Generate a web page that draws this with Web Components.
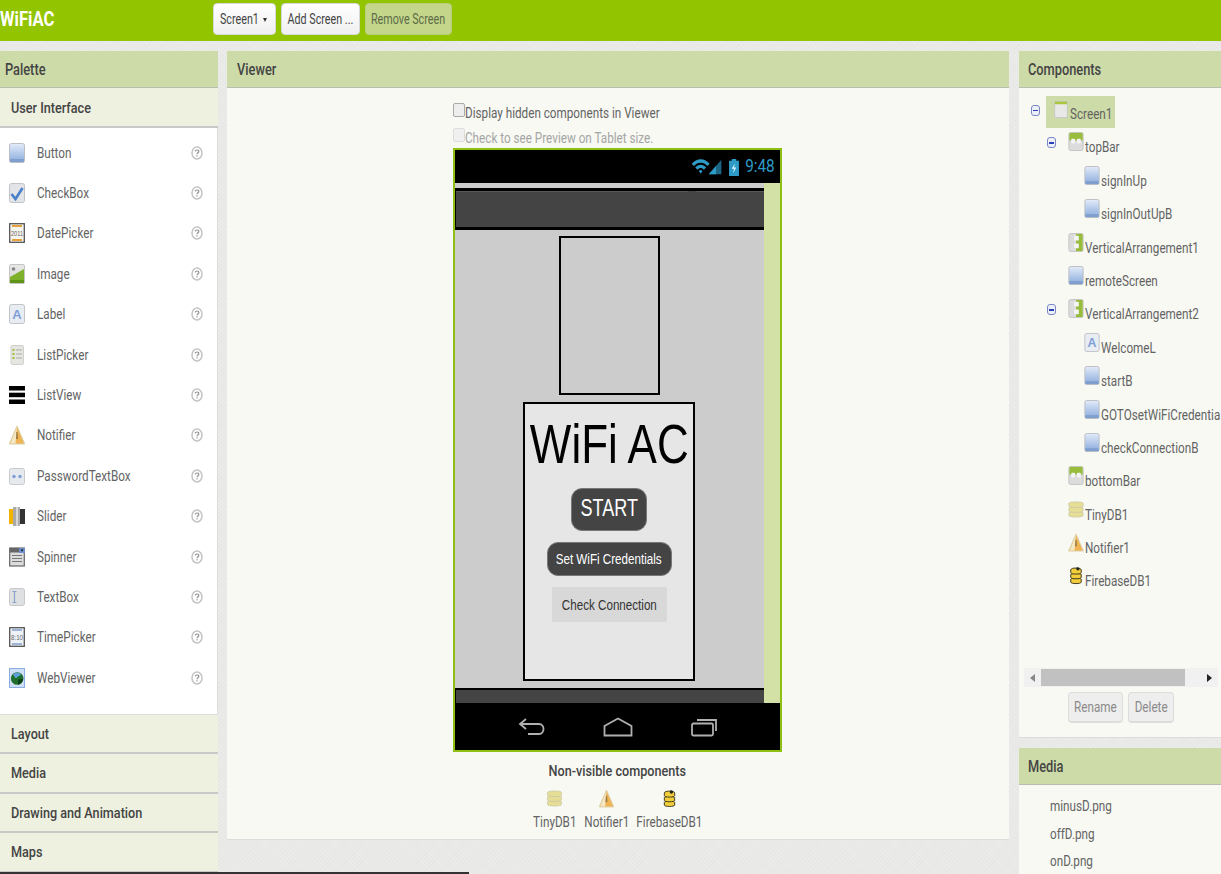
<!DOCTYPE html>
<html>
<head>
<meta charset="utf-8">
<title>WiFiAC</title>
<style>
  html, body { margin: 0; height: 874px; overflow: hidden; }
  body {
    background-color: #e9e9e7;
    background-image:
      repeating-linear-gradient(45deg, rgba(255,255,255,.14) 0 1px, transparent 1px 3px),
      repeating-linear-gradient(-45deg, rgba(0,0,0,.012) 0 1px, transparent 1px 3px);
    font-family: Roboto, "Liberation Sans", sans-serif;
    color: #555;
  }
</style>
</head>
<body>
<ai-app>
  <ai-topbar slot="top">
    <ai-tbtn arrow>Screen1</ai-tbtn>
    <ai-tbtn style="width:79px">Add Screen ...</ai-tbtn>
    <ai-tbtn off style="width:87px">Remove Screen</ai-tbtn>
  </ai-topbar>

  <ai-panel slot="left" title="Palette" style="height:823px">
    <ai-drawer style="line-height:40px">User Interface</ai-drawer>
    <ai-list>
      <pal-item icon="button">Button</pal-item>
      <pal-item icon="checkbox">CheckBox</pal-item>
      <pal-item icon="date">DatePicker</pal-item>
      <pal-item icon="image">Image</pal-item>
      <pal-item icon="label">Label</pal-item>
      <pal-item icon="listpicker">ListPicker</pal-item>
      <pal-item icon="listview">ListView</pal-item>
      <pal-item icon="notifier">Notifier</pal-item>
      <pal-item icon="password">PasswordTextBox</pal-item>
      <pal-item icon="slider">Slider</pal-item>
      <pal-item icon="spinner">Spinner</pal-item>
      <pal-item icon="textbox">TextBox</pal-item>
      <pal-item icon="time">TimePicker</pal-item>
      <pal-item icon="web">WebViewer</pal-item>
    </ai-list>
    <ai-drawer>Layout</ai-drawer>
    <ai-drawer>Media</ai-drawer>
    <ai-drawer>Drawing and Animation</ai-drawer>
    <ai-drawer>Maps</ai-drawer>
  </ai-panel>

  <ai-panel slot="mid" title="Viewer" pad style="height:788px">
    <ai-viewer></ai-viewer>
  </ai-panel>

  <ai-panel slot="right" title="Components" pad style="height:686px;--pl:9px">
    <ai-tree>
      <tree-row level="0" icon="screen" toggle selected>Screen1</tree-row>
      <tree-row level="1" icon="hbar" toggle>topBar</tree-row>
      <tree-row level="2" icon="button">signInUp</tree-row>
      <tree-row level="2" icon="button">signInOutUpB</tree-row>
      <tree-row level="1" icon="vbar">VerticalArrangement1</tree-row>
      <tree-row level="1" icon="button">remoteScreen</tree-row>
      <tree-row level="1" icon="vbar" toggle>VerticalArrangement2</tree-row>
      <tree-row level="2" icon="label">WelcomeL</tree-row>
      <tree-row level="2" icon="button">startB</tree-row>
      <tree-row level="2" icon="button">GOTOsetWiFiCredentia</tree-row>
      <tree-row level="2" icon="button">checkConnectionB</tree-row>
      <tree-row level="1" icon="hbar">bottomBar</tree-row>
      <tree-row level="1" icon="db">TinyDB1</tree-row>
      <tree-row level="1" icon="notifier">Notifier1</tree-row>
      <tree-row level="1" icon="firebase">FirebaseDB1</tree-row>
    </ai-tree>
  </ai-panel>

  <ai-panel slot="right" title="Media" pad style="height:200px;--pl:9px">
    <ai-media>
      <media-row>minusD.png</media-row>
      <media-row>offD.png</media-row>
      <media-row>onD.png</media-row>
    </ai-media>
  </ai-panel>
</ai-app>

<script>
(function () {
  const grad = (id, a, b) =>
    `<defs><linearGradient id="${id}" x1="0" y1="0" x2="0" y2="1"><stop offset="0" stop-color="${a}"/><stop offset="1" stop-color="${b}"/></linearGradient></defs>`;

  // 16x20 component icons
  const ICONS = {
    button: grad("g", "#e3ecf9", "#88a9dc") +
      `<rect x=".5" y=".5" width="15" height="19" rx="2" fill="url(#g)" stroke="#b9bec4"/><rect x="1" y="16" width="14" height="3" fill="#7f9fce"/>`,
    checkbox: `<rect x=".5" y=".5" width="15" height="19" rx="2" fill="#e2e4e8" stroke="#bfc2c6"/><path d="M2.500 11l4 5 7-11" fill="none" stroke="#4a7fc9" stroke-width="2.600"/>`,
    date: `<rect x=".7" y=".7" width="14.600" height="18.600" fill="#f6f4ee" stroke="#555" stroke-width="1.300"/><rect x="3" y="2" width="10" height="2" fill="#e3a23c"/><rect x="3" y="16" width="10" height="2" fill="#e3a23c"/><text x="8" y="12.500" font-size="7" text-anchor="middle" font-family="Liberation Sans" fill="#666" textLength="12" lengthAdjust="spacingAndGlyphs">2011</text>`,
    image: grad("g", "#e8e8e8", "#d5d8d0") +
      `<rect x=".5" y=".5" width="15" height="19" rx="1.500" fill="url(#g)" stroke="#c5c5c5"/><circle cx="4.500" cy="5" r="1.800" fill="#888"/><path d="M1 17V13L15 5V19H1z" fill="#7fb02c"/><path d="M1 19v-3h14v3z" fill="#5f9416"/>`,
    label: `<rect x=".5" y=".5" width="15" height="19" rx="2" fill="#e8ecf3" stroke="#c0c3c8"/><text x="8" y="14.500" font-size="13" font-weight="700" text-anchor="middle" font-family="Liberation Sans" fill="#7f9fd8">A</text>`,
    listpicker: `<rect x="2" y=".5" width="12.500" height="19" rx="1.500" fill="#e6e6e0" stroke="#cfcfcf"/><g fill="#9dbb3c"><rect x="3.500" y="4" width="2" height="2"/><rect x="3.500" y="8" width="2" height="2"/><rect x="3.500" y="12" width="2" height="2"/></g><g fill="#aaa"><rect x="7" y="4.500" width="6" height="1"/><rect x="7" y="8.500" width="6" height="1"/><rect x="7" y="12.500" width="6" height="1"/></g>`,
    listview: `<g fill="#000"><rect y="1" width="16" height="4.500"/><rect y="7.700" width="16" height="4.500"/><rect y="14.500" width="16" height="4.500"/></g>`,
    notifier: `<path d="M8 1L15.800 19H.2z" fill="#f0b455" stroke="#d9d2b0"/><path d="M8 2L6.500 18.500H1.200z" fill="#f3e7c6"/><path d="M7.400 7h1.200l.4 7H7z" fill="#9a7a44"/>`,
    password: `<rect x=".5" y="2.500" width="15" height="16" rx="2" fill="#e6e9ee" stroke="#c8cacd"/><circle cx="5" cy="10.500" r="1.700" fill="#7f9fd8"/><circle cx="11" cy="10.500" r="1.700" fill="#7f9fd8"/>`,
    slider: `<rect y="3" width="5" height="15" fill="#f2b400"/><rect x="4" y="1" width="7" height="19" rx="1" fill="#a9a9a9"/><rect x="7" y="1" width="2" height="19" fill="#d7d7d7"/><rect x="11" y="3" width="5" height="15" fill="#333"/>`,
    spinner: `<rect x=".7" y="1" width="14.600" height="18" fill="#dcdcdc" stroke="#666" stroke-width="1.200"/><rect x="1" y="1" width="14" height="4.500" fill="#666"/><rect x="10" y="1" width="6" height="5" fill="#6d8fd0"/><path d="M11.500 2.500h3l-1.500 2z" fill="#111"/><g fill="#777"><rect x="3" y="8" width="10" height="1"/><rect x="3" y="11" width="10" height="1"/><rect x="3" y="14" width="10" height="1"/></g>`,
    textbox: `<rect x=".5" y="1.500" width="15" height="17" rx="2" fill="#dfe0e2" stroke="#c8c8c8"/><path d="M3.500 4.500h4M3.500 15.500h4M5.500 4.500v11" stroke="#8ba4cc" stroke-width="1.200" fill="none"/>`,
    time: `<rect x=".7" y=".7" width="14.600" height="18.600" fill="#eef2f6" stroke="#555" stroke-width="1.300"/><rect x="3" y="2" width="10" height="2" fill="#9db4d6"/><rect x="3" y="16" width="10" height="2" fill="#9db4d6"/><text x="8" y="12.500" font-size="7" text-anchor="middle" font-family="Liberation Sans" fill="#666" textLength="12" lengthAdjust="spacingAndGlyphs">8:10</text>`,
    web: `<rect x=".5" y=".5" width="15" height="19" fill="#cfdff5" stroke="#8aaee0"/><circle cx="8.200" cy="10.500" r="6.300" fill="#1e6d2a"/><path d="M4 6.500c2-2 6-2.500 8 0-1 2-3 1-4 3s-2 0-4-3z" fill="#5ea0d8"/><path d="M9 12c2-1 4-1 5-1-.5 3-3 5.500-5 5.500z" fill="#0e3f1a"/>`,
    db: `<g fill="#e6de95" stroke="#c9c7a6" stroke-width=".8"><path d="M.5 13.500c0-1.500 15-1.500 15 0v3c0 2-15 2-15 0z"/><path d="M.5 8.500c0-1.500 15-1.500 15 0v3c0 2-15 2-15 0z"/><path d="M.5 3.500c0-2 15-2 15 0v3c0 2-15 2-15 0z"/></g>`,
    firebase: `<g fill="#f2cf3a" stroke="#3a3520" stroke-width="1"><path d="M2.500 14c0-1.500 11-1.500 11 0v3c0 2-11 2-11 0z"/><path d="M2.500 9c0-1.500 11-1.500 11 0v3c0 2-11 2-11 0z"/><path d="M2.500 4c0-2.500 11-2.500 11 0v3c0 2-11 2-11 0z"/></g><circle cx="10" cy="3" r="1.800" fill="#222"/>`,
    screen: `<rect x=".7" y=".7" width="14.600" height="18.600" rx="1.500" fill="#e8e8e6" stroke="#c4c4c4"/><rect x="1" y="1" width="14" height="3" fill="#a9c83f"/>`,
    hbar: `<rect x=".5" y=".5" width="15" height="19" rx="2" fill="#dcdcdc" stroke="#c4c4c4"/><rect x="1" y="1" width="14" height="8" fill="#98bd3c"/><rect x="3" y="7" width="4" height="5" rx="1" fill="#f4f4f4"/><rect x="9" y="7" width="4" height="5" rx="1" fill="#f4f4f4"/>`,
    vbar: `<rect x=".5" y=".5" width="15" height="19" rx="2" fill="#dcdcdc" stroke="#c4c4c4"/><rect x="8" y="1" width="7" height="18" fill="#98bd3c"/><rect x="6" y="3" width="5" height="5" rx="1" fill="#f4f4f4"/><rect x="6" y="11" width="5" height="5" rx="1" fill="#f4f4f4"/>`
  };

  function define(name, html, extra) {
    const template = document.createElement("template");
    template.innerHTML = html;
    class El extends HTMLElement {
      constructor() {
        super();
        this.attachShadow({ mode: "open" });
        this.shadowRoot.appendChild(template.content.cloneNode(true));
      }
      connectedCallback() {
        if (extra) extra.call(this);
      }
    }
    customElements.define(name, El);
  }

  // the reference is squeezed horizontally, so its text is too
  define("ai-t", `
    <style>
      :host {
        display: inline-block;
        white-space: nowrap;
        transform: scaleX(var(--sq, .78));
        transform-origin: var(--so, left) center;
      }
    </style><slot></slot>`);

  // name is set by the parent element after cloning, so watch the attribute
  class AiIcon extends HTMLElement {
    static get observedAttributes() {
      return ["name"];
    }

    constructor() {
      super();
      this.attachShadow({ mode: "open" });
      this.shadowRoot.innerHTML = `
        <style>
          :host { display: inline-block; width: 16px; height: 20px; flex: none; }
          svg { display: block; width: 100%; height: 100%; }
        </style><svg viewBox="0 0 16 20"></svg>`;
    }

    attributeChangedCallback(name, oldValue, newValue) {
      this.shadowRoot.querySelector("svg").innerHTML = ICONS[newValue] || "";
    }
  }
  customElements.define("ai-icon", AiIcon);

  define("ai-help", `
    <style>
      :host { display: block; width: 12px; height: 14px; flex: none; }
      svg { display: block; }
    </style>
    <svg width="12" height="14" viewBox="0 0 12 14">
      <ellipse cx="6" cy="7" rx="5" ry="6" fill="#fff" stroke="#c4c4c4" stroke-width="1.500"/>
      <path d="M4.200 5.400c.2-1.900 3.600-1.900 3.600 0 0 1.300-1.800 1.300-1.800 2.900" fill="none" stroke="#929292" stroke-width="1.200"/>
      <rect x="5.400" y="9.200" width="1.200" height="1.200" fill="#929292"/>
    </svg>`);

  define("ai-app", `
    <style>
      :host { display: block; width: 1221px; height: 874px; overflow: hidden; position: relative; }
      .cols { display: flex; padding-top: 10px; }
      .left { display: block; width: 218px; flex: none; }
      .mid { display: block; width: 782px; flex: none; margin-left: 9px; }
      .right { display: flex; flex-direction: column; gap: 11px; flex: none; width: 202px; margin-left: 10px; }
      .strip { position: absolute; left: 0; bottom: 0; width: 469px; height: 2px; background: #333; }
    </style>
    <slot name="top"></slot>
    <div class="cols">
      <div class="left"><slot name="left"></slot></div>
      <div class="mid"><slot name="mid"></slot></div>
      <div class="right"><slot name="right"></slot></div>
    </div>
    <div class="strip"></div>`);

  define("ai-topbar", `
    <style>
      :host { display: flex; align-items: flex-start; height: 41px; background: #92c400; box-sizing: border-box; }
      .logo { width: 213px; flex: none; height: 41px; line-height: 39px; color: #fff; font-size: 21px; font-weight: 700; --sq: .79; }
      .btns { display: flex; gap: 5px; padding-top: 3px; }
    </style>
    <div class="logo"><ai-t>WiFiAC</ai-t></div>
    <div class="btns"><slot></slot></div>`);

  define("ai-tbtn", `
    <style>
      :host {
        display: flex; align-items: center; justify-content: center;
        position: relative;
        width: 63px; height: 32px; box-sizing: border-box;
        background: linear-gradient(#fff, #f0f0f0);
        border: 1px solid #d8d8d8; border-radius: 4px;
        font-size: 14.500px; color: #444; --so: center; --sq: .74;
      }
      :host([off]) { background: #c3d68a; border-color: #b8cd78; color: #5c6b48; }
      :host([arrow]) { justify-content: flex-start; padding-left: 6px; --so: left; }
      .arrow { display: none; position: absolute; right: 8px; top: 14px; width: 0; height: 0; border: 2.500px solid transparent; border-top: 4px solid #333; border-bottom: 0; }
      :host([arrow]) .arrow { display: block; }
      ai-t { margin: 0 -8px; }
      :host([arrow]) ai-t { margin: 0; }
    </style>
    <ai-t><slot></slot></ai-t><span class="arrow"></span>`);

  define("ai-panel", `
    <style>
      :host { display: flex; flex-direction: column; background: #f8f9f3; box-sizing: border-box; overflow: hidden; box-shadow: 0 1px 0 #dcdcdc; }
      .head {
        height: 37px; flex: none; box-sizing: border-box;
        background: #cddba8; border-bottom: 1px solid #b9bdaf;
        font-size: 16px; font-weight: 500; line-height: 38px; color: #444; --sq: .8;
      }
      :host([pad]) .head { padding-left: var(--pl, 10px); }
      :host(:not([pad])) .head { padding-left: 5px; }
      .body { flex: 1; min-height: 0; display: flex; flex-direction: column; }
    </style>
    <div class="head"><ai-t class="title"></ai-t></div>
    <div class="body"><slot></slot></div>`, function () {
    this.shadowRoot.querySelector(".title").textContent = this.getAttribute("title");
    this.removeAttribute("title");
  });

  define("ai-drawer", `
    <style>
      :host {
        display: block; height: 39.500px; box-sizing: border-box; flex: none;
        background: #eef1e0; border-bottom: 2px solid #c9c9c9;
        padding-left: 11px; font-size: 15.500px; font-weight: 500; line-height: 38px; color: #444; --sq: .815;
      }
    </style><ai-t><slot></slot></ai-t>`);

  define("ai-list", `
    <style>
      :host { display: block; height: 587px; background: #fff; padding-top: 5px; box-sizing: border-box; flex: none; border-right: 1px solid #ddd; border-bottom: 1px solid #ddd; }
    </style><slot></slot>`);

  define("pal-item", `
    <style>
      :host { display: flex; align-items: center; height: 40.400px; padding-left: 9px; font-size: 15px; color: #636363; }
      ai-t { margin-left: 12px; flex: 1; }
      ai-help { margin-right: 14px; }
    </style>
    <ai-icon></ai-icon><ai-t><slot></slot></ai-t><ai-help></ai-help>`, function () {
    this.shadowRoot.querySelector("ai-icon").setAttribute("name", this.getAttribute("icon"));
  });

  define("ai-viewer", `
    <style>
      :host { display: flex; flex-direction: column; align-items: center; padding-right: 1px; font-size: 15px; color: #636363; }
      .checks { width: 329px; padding-top: 15px; height: 45px; flex: none; box-sizing: content-box; }
      .check { display: flex; align-items: flex-start; height: 25px; line-height: 21px; }
      .check i { display: block; width: 10px; height: 12px; margin-top: 0; border: 1px solid #aaa; border-radius: 2px; background: #eee; flex: none; }
      .check.dim { color: #a5a5a5; height: 20px; line-height: 21px; }
      .check.dim i { border-color: #ddd; background: #f0f0f0; }
      .nv { margin-top: 10px; font-weight: 500; font-size: 15.500px; line-height: 18px; color: #444; --so: center; --sq: .815; }
      .items { display: flex; gap: 8px; margin-top: 9px; --so: center; }
      .item { display: flex; flex-direction: column; align-items: center; font-size: 15px; line-height: 18px; }
      .item ai-icon { width: 15px; height: 19px; margin-bottom: 5px; }
    </style>
    <div class="checks">
      <div class="check"><i></i><ai-t>Display hidden components in Viewer</ai-t></div>
      <div class="check dim"><i></i><ai-t>Check to see Preview on Tablet size.</ai-t></div>
    </div>
    <ai-phone></ai-phone>
    <div class="nv"><ai-t>Non-visible components</ai-t></div>
    <div class="items">
      <div class="item" style="width:44px"><ai-icon name="db"></ai-icon><ai-t>TinyDB1</ai-t></div>
      <div class="item" style="width:44px"><ai-icon name="notifier"></ai-icon><ai-t>Notifier1</ai-t></div>
      <div class="item" style="width:66px"><ai-icon name="firebase"></ai-icon><ai-t>FirebaseDB1</ai-t></div>
    </div>`);

  define("ai-phone", `
    <style>
      :host { display: flex; flex-direction: column; width: 329px; height: 604px; box-sizing: border-box; border: 2px solid #8fbf12; background: #000; flex: none; }
      .status { height: 33px; flex: none; display: flex; align-items: center; justify-content: flex-end; padding-right: 5px; color: #2e9ac6; font-size: 18px; line-height: 20px; --sq: .85; --so: right; }
      .status svg { display: block; }
      .status ai-t { margin-top: -2px; }
      .main { flex: 1; display: flex; min-height: 0; }
      .screen { width: 309px; flex: none; background: #cccccc; display: flex; flex-direction: column; align-items: center; box-sizing: border-box; padding-top: 5px; }
      .side { flex: 1; background: #d3e0a6; }
      .bar { align-self: stretch; background: #444; flex: none; box-sizing: border-box; border-left: 1px solid #000; }
      .bar.top { height: 42px; border-top: 3px solid #000; border-bottom: 3px solid #000; display: flex; }
      .bar.top i { display: block; height: 1px; background: #585858; }
      .bar.top i:first-child { width: 232px; margin-right: 8px; }
      .bar.top i:last-child { flex: 1; }
      .bar.bot { height: 15px; border-top: 2px solid #000; margin-top: auto; }
      .pic { width: 101px; height: 159px; box-sizing: border-box; border: 2.500px solid #000; margin-top: 6px; flex: none; }
      .card {
        width: 172px; height: 279px; box-sizing: border-box; margin-top: 7px; margin-right: 1px; flex: none;
        border: 2.500px solid #000; background: #e6e6e6;
        display: flex; flex-direction: column; align-items: center;
        font-family: "Liberation Sans", Arial, sans-serif; --so: center;
      }
      .title { font-size: 55px; line-height: 63px; margin-top: 9px; color: #000; --sq: .8; }
      .btn { display: flex; align-items: center; justify-content: center; box-sizing: border-box; flex: none; --sq: .75; }
      .start { width: 76px; height: 43px; margin-top: 12px; padding-bottom: 3px; background: #444; color: #fff; border-radius: 11px; border: 1px solid #777; font-size: 24px; }
      .creds { width: 125px; height: 34px; margin-top: 11px; background: #444; color: #fff; border-radius: 11px; border: 1px solid #777; font-size: 15.500px; }
      .conn { width: 115px; height: 35px; margin-top: 11px; background: #d8d8d8; color: #333; border-radius: 2px; font-size: 15.500px; }
      .nav { height: 47px; flex: none; display: flex; justify-content: center; align-items: center; padding-left: 2px; }
      .nav svg { display: block; fill: none; stroke: #b0b0b0; stroke-width: 1.800; }
    </style>
    <div class="status">
      <svg width="32" height="18" viewBox="0 0 34 20" style="margin-right:6px">
        <path d="M0 6.500C5-.5 15-.5 20 6.500L17.500 9C13.500 4 6.500 4 2.500 9z" fill="#2e9ac6"/>
        <path d="M4 10.500C7.500 6.500 12.500 6.500 16 10.500L13.500 13C11.500 10.500 8.500 10.500 6.500 13z" fill="#2e9ac6"/>
        <path d="M8 14.500C9.500 13 10.500 13 12 14.500L10 17.500z" fill="#2e9ac6"/>
        <path d="M19 18L33 2V18z" fill="#1b6684"/>
        <path d="M19 18L27 9V18z" fill="#2e9ac6"/>
      </svg>
      <svg width="10" height="18" viewBox="0 0 11 20" style="margin-right:1px">
        <path d="M3 1h5v2h3v17H0V3h3z" fill="#2e9ac6"/>
        <path d="M6.500 6L3 12h2.500L4.500 17 8 10.500H5.500z" fill="#dff3fb"/>
      </svg>
      <ai-t>9:48</ai-t>
    </div>
    <div class="main">
      <div class="screen">
        <div class="bar top"><i></i><i></i></div>
        <div class="pic"></div>
        <div class="card">
          <div class="title"><ai-t>WiFi AC</ai-t></div>
          <div class="btn start"><ai-t>START</ai-t></div>
          <div class="btn creds"><ai-t>Set WiFi Credentials</ai-t></div>
          <div class="btn conn"><ai-t>Check Connection</ai-t></div>
        </div>
        <div class="bar bot"></div>
      </div>
      <div class="side"></div>
    </div>
    <div class="nav">
      <svg width="28" height="20" viewBox="0 0 28 20" style="margin-right:57px">
        <path d="M8 2L2 7l6 5"/><path d="M2 7h19c6 0 6 10 0 10H10"/>
      </svg>
      <svg width="30" height="20" viewBox="0 0 30 20" style="margin-right:58px">
        <path d="M1.500 18.500V9L15 1.500 28.500 9v9.500z"/>
      </svg>
      <svg width="28" height="20" viewBox="0 0 28 20">
        <rect x="1" y="6.500" width="21" height="12" rx="1.500"/><path d="M6 3h19v11"/>
      </svg>
    </div>`);

  define("ai-tree", `
    <style>
      :host { display: block; flex: 1; min-height: 0; padding-top: 9px; overflow: hidden; position: relative; }
      .foot { position: absolute; left: 5px; top: 580px; width: 194px; }
      .sb { display: flex; align-items: center; height: 19px; background: #f1f1f1; }
      .sb b { width: 17px; display: flex; justify-content: center; flex: none; }
      .sb b::before { content: ""; border: 4px solid transparent; }
      .sb b.l::before { border-right: 5px solid #888; border-left: 0; }
      .sb b.r::before { border-left: 5px solid #222; border-right: 0; }
      .sb i { display: block; width: 144px; height: 17px; background: #c1c1c1; flex: none; }
      .sb span { flex: 1; }
      .btns { display: flex; justify-content: center; gap: 5px; margin-top: 5px; color: #8a8a8a; font-size: 15px; --so: center; }
      .btns div { display: flex; justify-content: center; align-items: center; height: 31px; box-sizing: border-box; background: #eee; border: 1px solid #ddd; border-bottom: 2px solid #ddd; border-radius: 4px; }
    </style>
    <slot></slot>
    <div class="foot">
      <div class="sb"><b class="l"></b><i></i><span></span><b class="r"></b></div>
      <div class="btns"><div style="width:55px"><ai-t>Rename</ai-t></div><div style="width:46px"><ai-t>Delete</ai-t></div></div>
    </div>`);

  define("tree-row", `
    <style>
      :host { display: flex; align-items: flex-start; height: 33.400px; font-size: 15px; color: #636363; white-space: nowrap; }
      .tog { width: 9px; height: 11px; flex: none; margin-top: 7px; margin-right: 12px; box-sizing: border-box; }
      .tog.on { border: 1.300px solid #7b87c4; border-radius: 3px; background: #eef0f8; display: flex; align-items: center; justify-content: center; }
      .tog.on::before { content: ""; width: 5px; height: 1.500px; background: #2b3fb8; }
      .lbl { display: flex; align-items: flex-start; height: 32px; }
      ai-icon { margin-top: 2px; width: 16px; height: 19px; }
      ai-t { margin-left: 1px; line-height: 20px; margin-top: 7px; }
      :host([selected]) .lbl { background: #cddba8; box-sizing: border-box; width: 69px; padding-left: 8px; margin-left: -6px; margin-top: -1px; }
      :host([selected]) ai-icon { margin-top: 4px; width: 14px; height: 19px; }
      :host([selected]) ai-t { margin-top: 8px; margin-left: 2px; }
      :host([selected]) .tog { margin-top: 8px; }
    </style>
    <div class="tog"></div>
    <div class="lbl"><ai-icon></ai-icon><ai-t><slot></slot></ai-t></div>`, function () {
    const level = +this.getAttribute("level");
    this.style.paddingLeft = 12 + level * 16 + "px";
    this.shadowRoot.querySelector("ai-icon").setAttribute("name", this.getAttribute("icon"));
    if (this.hasAttribute("toggle")) this.shadowRoot.querySelector(".tog").classList.add("on");
  });

  define("ai-media", `
    <style>
      :host { display: block; padding: 8px 0 0 31px; }
    </style><slot></slot>`);

  define("media-row", `
    <style>
      :host { display: block; height: 27.500px; line-height: 27.500px; font-size: 15px; color: #636363; }
    </style><ai-t><slot></slot></ai-t>`);
})();
</script>
</body>
</html>
